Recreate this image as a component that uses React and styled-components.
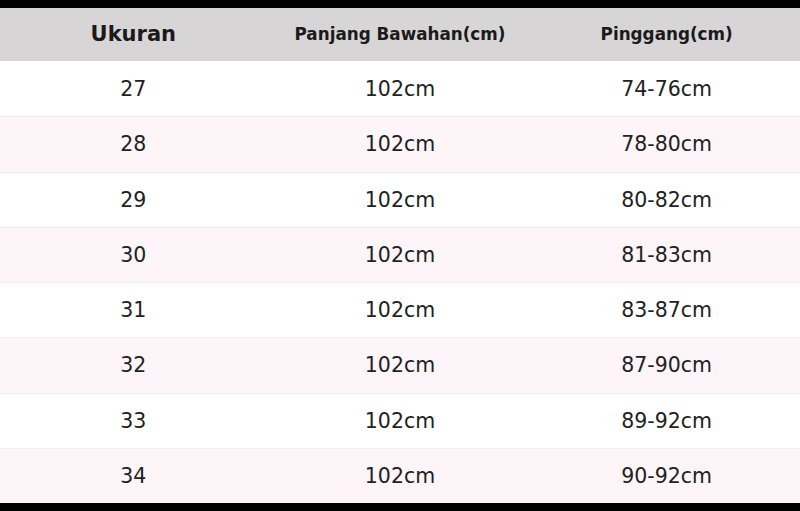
import styled, { createGlobalStyle } from 'styled-components'

const GlobalStyle = createGlobalStyle`
  html, body {
    margin: 0;
    padding: 0;
    background: #000;
  }
  body {
    font-family: 'DejaVu Sans', 'Liberation Sans', sans-serif;
  }
`

const Frame = styled.div`
  width: 800px;
  height: 511px;
  background: #000;
  padding: 8px 0 8px;
  box-sizing: border-box;
  display: flex;
  flex-direction: column;
`

const Table = styled.div`
  flex: 1;
  display: grid;
  grid-template-rows: 53px repeat(8, 1fr);
  background: #fff;
`

const Row = styled.div`
  display: grid;
  grid-template-columns: repeat(3, 1fr);
  align-items: center;
  background: ${(props) => (props.$alt ? '#fdf5f8' : '#ffffff')};
  border-top: 1px solid ${(props) => (props.$first ? 'transparent' : '#f1ecee')};
`

const HeadRow = styled(Row)`
  background: #d8d5d7;
  border-top: none;
`

const HeadCell = styled.div`
  text-align: center;
  font-weight: bold;
  color: #1a1a1a;
  font-size: ${(props) => (props.$big ? '21px' : '16.8px')};
  padding-bottom: 2px;
`

const Cell = styled.div`
  text-align: center;
  font-size: 20.5px;
  color: #222;
`

const sizes = [
  ['27', '74-76cm'],
  ['28', '78-80cm'],
  ['29', '80-82cm'],
  ['30', '81-83cm'],
  ['31', '83-87cm'],
  ['32', '87-90cm'],
  ['33', '89-92cm'],
  ['34', '90-92cm'],
]

const App = () => {
  return (
    <>
      <GlobalStyle />
      <Frame>
        <Table>
          <HeadRow>
            <HeadCell $big>Ukuran</HeadCell>
            <HeadCell>Panjang Bawahan(cm)</HeadCell>
            <HeadCell>Pinggang(cm)</HeadCell>
          </HeadRow>
          {sizes.map(([size, waist], i) => (
            <Row key={size} $alt={i % 2 === 1} $first={i === 0}>
              <Cell>{size}</Cell>
              <Cell>102cm</Cell>
              <Cell>{waist}</Cell>
            </Row>
          ))}
        </Table>
      </Frame>
    </>
  )
}

export default App
